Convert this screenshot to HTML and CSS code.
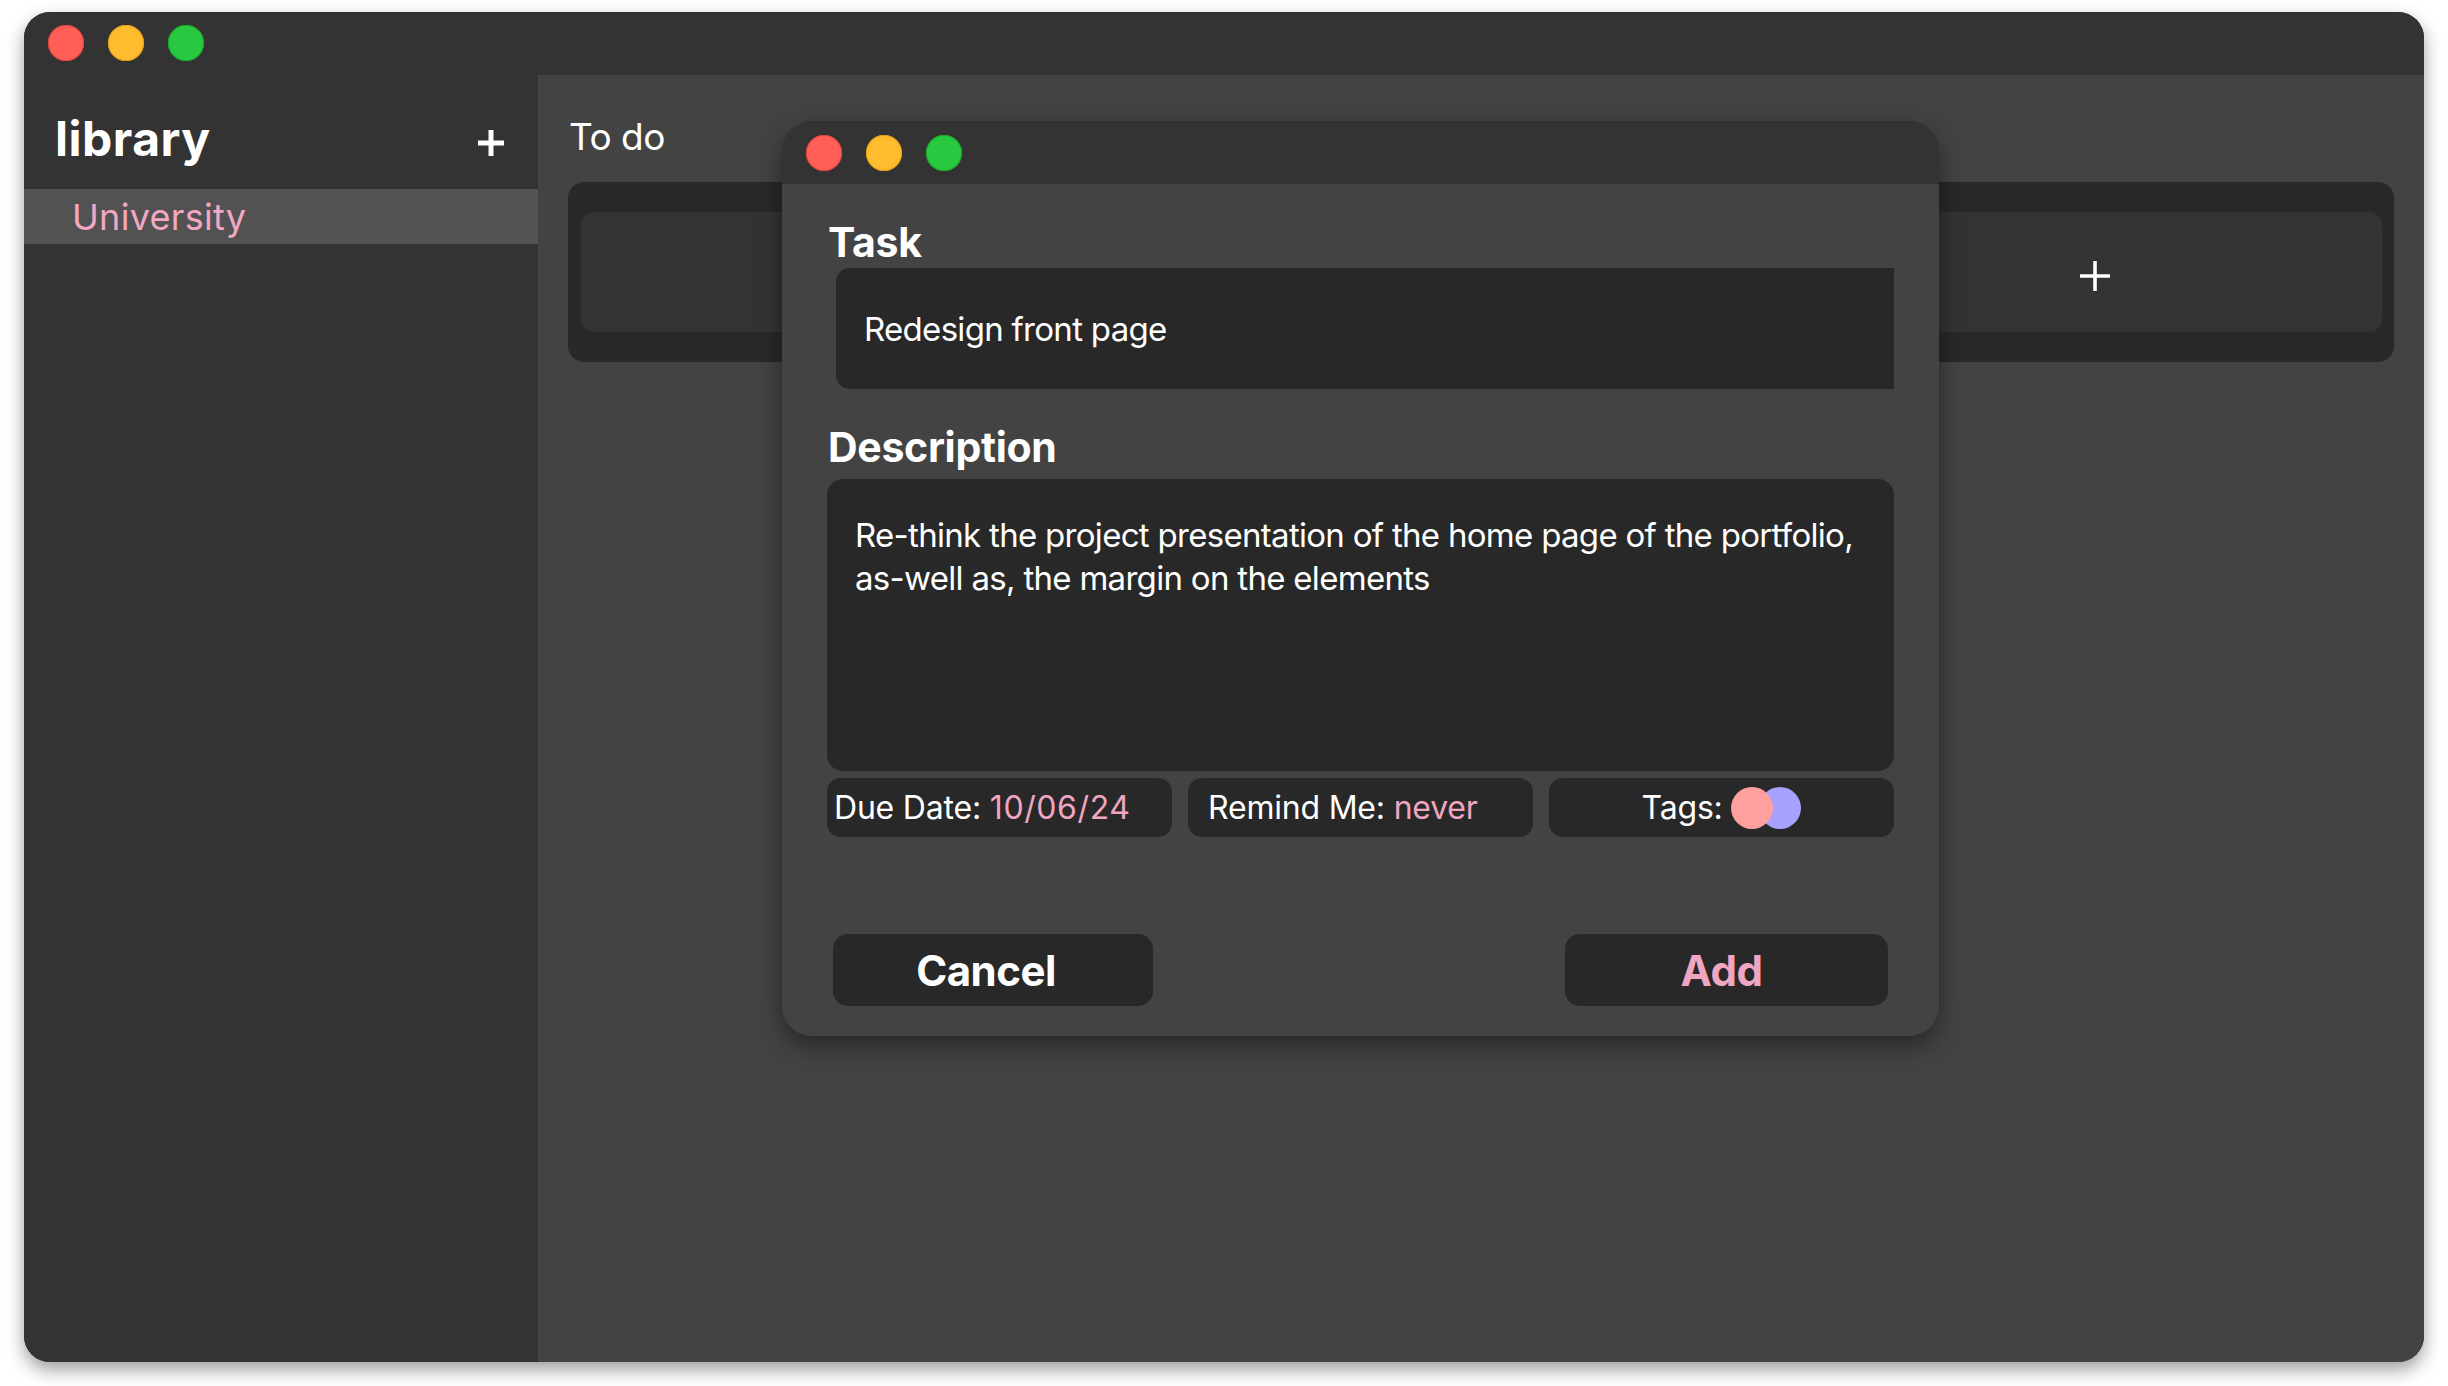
FILE: index.html
```html
<!DOCTYPE html>
<html lang="en">
<head>
<meta charset="utf-8">
<title>Tasks</title>
<link rel="stylesheet" href="styles.css">
</head>
<body>
<div class="window">
  <div class="titlebar">
    <span class="light red"></span><span class="light yellow"></span><span class="light green"></span>
  </div>
  <div class="panes">
    <aside class="sidebar">
      <div class="side-head">
        <h1 class="lib-title">library</h1>
        <svg class="side-plus" width="28" height="28" viewBox="0 0 28 28"><path d="M14 1v26M1 14h26" stroke="#fff" stroke-width="5" fill="none"/></svg>
      </div>
      <div class="side-item">University</div>
    </aside>
    <main class="main">
      <h2 class="col-title">To do</h2>
      <div class="column">
        <div class="card">
          <svg class="card-plus" width="30" height="30" viewBox="0 0 30 30"><path d="M15 0v30M0 15h30" stroke="#fff" stroke-width="3.6" fill="none"/></svg>
        </div>
      </div>

      <div class="modal">
        <div class="modal-bar">
          <span class="light red"></span><span class="light yellow"></span><span class="light green"></span>
        </div>
        <div class="modal-body">
          <h3 class="field-label">Task</h3>
          <div class="task-input">Redesign front page</div>
          <h3 class="field-label desc-label">Description</h3>
          <div class="desc-box">Re-think the project presentation of the home page of the portfolio,<br>as-well as, the margin on the elements</div>
          <div class="meta">
            <div class="pill pill-date">Due Date:&nbsp;<span class="accent">10/06/24</span></div>
            <div class="pill pill-remind">Remind Me:&nbsp;<span class="accent">never</span></div>
            <div class="pill pill-tags">Tags:&nbsp;<span class="dots"><span class="dot dot-purple"></span><span class="dot dot-pink"></span></span></div>
          </div>
          <div class="actions">
            <button class="btn btn-cancel">Cancel</button>
            <button class="btn btn-add">Add</button>
          </div>
        </div>
      </div>
    </main>
  </div>
</div>
</body>
</html>
```
FILE: styles.css
```css
* { box-sizing: border-box; }
html, body {
  margin: 0;
  padding: 0;
  background: #ffffff;
  width: 2448px;
  height: 1386px;
  overflow: hidden;
  font-family: "Inter", "Noto Sans", sans-serif;
  color: #ffffff;
}
.window {
  margin: 12px 0 0 24px;
  width: 2400px;
  height: 1350px;
  border-radius: 26px;
  overflow: hidden;
  background: #333333;
  box-shadow: 0 8px 18px rgba(0,0,0,0.38);
  display: flex;
  flex-direction: column;
}
.titlebar {
  height: 63px;
  flex: none;
  display: flex;
  align-items: flex-start;
  padding: 13px 0 0 24px;
  gap: 24px;
  background: #333333;
}
.light {
  width: 36px;
  height: 36px;
  border-radius: 50%;
  flex: none;
  display: block;
}
.red { background: #ff5f57; box-shadow: inset 0 0 0 1px #e2463f; }
.yellow { background: #febc2e; box-shadow: inset 0 0 0 1px #e1a116; }
.green { background: #28c840; box-shadow: inset 0 0 0 1px #1aab29; }

.panes {
  flex: 1;
  display: flex;
  min-height: 0;
}
.sidebar {
  width: 514px;
  flex: none;
  background: #333333;
}
.side-head {
  height: 114px;
  display: flex;
  align-items: flex-start;
  justify-content: space-between;
  padding: 40px 33px 0 31px;
}
.lib-title {
  margin: 0;
  font-size: 48px;
  font-weight: 700;
  line-height: 48px;
  letter-spacing: 0.5px;
}
.side-plus { margin-top: 14px; }
.side-item {
  height: 55px;
  background: #525252;
  padding-left: 48px;
  display: flex;
  align-items: center;
  font-size: 36px;
  color: #f2a8c4;
  letter-spacing: 0.3px;
}

.main {
  flex: 1;
  background: #434343;
  position: relative;
  padding: 0 30px 0 30px;
}
.col-title {
  margin: 43px 0 0 1px;
  font-size: 37px;
  font-weight: 400;
  line-height: 37px;
  letter-spacing: -0.5px;
}
.column {
  margin-top: 27px;
  height: 180px;
  background: #292929;
  border-radius: 16px;
  padding: 30px 12px 30px 13px;
}
.card {
  height: 120px;
  background: #333333;
  border-radius: 13px;
  display: flex;
  align-items: center;
  justify-content: flex-end;
  padding-right: 272px;
}
.card-plus { margin-top: 8px; }

.modal {
  position: absolute;
  left: 244px;
  top: 46px;
  width: 1157px;
  height: 915px;
  border-radius: 30px;
  background: #434343;
  overflow: hidden;
  box-shadow: 0 10px 24px rgba(0,0,0,0.42);
  display: flex;
  flex-direction: column;
}
.modal-bar {
  height: 63px;
  flex: none;
  background: #333333;
  display: flex;
  align-items: flex-start;
  padding: 14px 0 0 24px;
  gap: 24px;
}
.modal-body {
  flex: 1;
  padding: 38px 45px 0 45px;
  display: flex;
  flex-direction: column;
}
.field-label {
  margin: 0;
  font-size: 41px;
  line-height: 41px;
  font-weight: 700;
  letter-spacing: -0.3px;
  padding-left: 1px;
}
.task-input {
  margin: 5px 0 0 9px;
  height: 121px;
  background: #282828;
  border-radius: 14px 0 0 14px;
  display: flex;
  align-items: center;
  padding-left: 28px;
  font-size: 33px;
  letter-spacing: -0.7px;
}
.desc-label { margin-top: 38px; }
.desc-box {
  margin-top: 11px;
  height: 292px;
  background: #282828;
  border-radius: 16px;
  padding: 35px 20px 0 28px;
  font-size: 33px;
  line-height: 43px;
  letter-spacing: -0.7px;
  white-space: nowrap;
}
.meta {
  margin-top: 7px;
  display: grid;
  grid-template-columns: repeat(3, 1fr);
  gap: 16px;
}
.pill {
  height: 59px;
  background: #282828;
  border-radius: 14px;
  display: flex;
  align-items: center;
  font-size: 32px;
  letter-spacing: -0.2px;
  white-space: nowrap;
}
.pill-date { padding-left: 7px; }
.pill-date .accent { letter-spacing: 0.6px; }
.pill-remind { padding-left: 20px; }
.pill-tags { justify-content: center; }
.accent { color: #f0a5c1; }
.dots {
  display: flex;
  flex-direction: row-reverse;
  justify-content: flex-end;
}
.dot {
  width: 42px;
  height: 42px;
  border-radius: 50%;
  display: block;
}
.dot-pink { background: #ffa0a0; position: relative; z-index: 1; }
.dot-purple { background: #a8a2ff; margin-left: -14px; }
.actions {
  margin-top: 97px;
  display: flex;
  justify-content: space-between;
  padding: 0 6px;
}
.btn {
  height: 72px;
  border: none;
  border-radius: 15px;
  background: #282828;
  font-family: "Inter", "Noto Sans", sans-serif;
  font-size: 42px;
  font-weight: 700;
  letter-spacing: -0.5px;
  color: #ffffff;
  padding: 0;
}
.btn-cancel { width: 320px; padding-right: 14px; }
.btn-add { width: 323px; color: #f0a5c1; padding-right: 10px; }
```
